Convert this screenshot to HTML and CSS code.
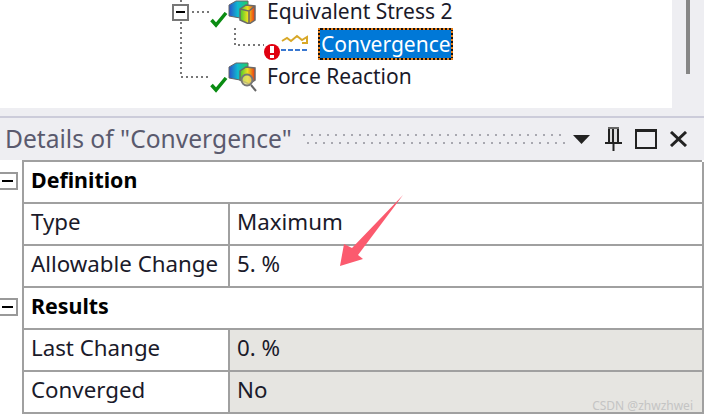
FILE: index.html
```html
<!DOCTYPE html>
<html lang="en">
<head>
  <meta charset="UTF-8">
  <meta name="viewport" content="width=device-width, initial-scale=1.0">
  <title>Details of Convergence</title>
  <link rel="stylesheet" href="styles.css">
</head>
<body>
  <svg class="defs" width="0" height="0">
    <defs>
      <linearGradient id="backFace" x1="0" x2="1" y1="0" y2="0">
        <stop offset="0" stop-color="#2a50c8"/>
        <stop offset=".45" stop-color="#10b8d0"/>
        <stop offset="1" stop-color="#20d060"/>
      </linearGradient>
      <linearGradient id="frontFace" x1="0" x2="1" y1="0" y2="0">
        <stop offset="0" stop-color="#40c830"/>
        <stop offset=".5" stop-color="#e8e020"/>
        <stop offset="1" stop-color="#f03010"/>
      </linearGradient>
    </defs>
  </svg>

  <div class="top-area">
    <div class="tree">
      <!-- dotted connectors lie over the rows -->
      <svg class="tree-lines" width="300" height="108" viewBox="172 0 300 108">
        <g fill="none" stroke="#777" stroke-width="2" stroke-dasharray="2 3">
          <path d="M181 0V4M181 22V77H208M192 12H210M235 28V45H264"/>
        </g>
        <rect x="173" y="5" width="15" height="15" fill="#fff" stroke="#777" stroke-width="2"/>
        <rect x="176" y="11" width="9" height="2" fill="#000"/>
      </svg>

      <div class="tree-row row-stress">
        <svg class="icon-state" width="20" height="16" viewBox="0 0 20 16"><path d="M1.500 8L6 13L16 1" fill="none" stroke="#0a8c12" stroke-width="3.500"/></svg>
        <svg class="icon-cube" width="28" height="24" viewBox="0 0 28 24">
          <path d="M1 5L8 1H20V14L12 18L1 16Z" fill="url(#backFace)" stroke="#666"/>
          <path d="M12 9L18 5L27 6V20L21 24L12 20Z" fill="url(#frontFace)"/>
          <path d="M12 9L18 5L27 6V20L21 24L12 20ZM12 9L21 11V24M21 11L27 6" fill="none" stroke="#6a6a6a" stroke-width="1.500"/>
        </svg>
        <span class="tree-label">Equivalent Stress 2</span>
      </div>

      <div class="tree-row row-conv">
        <svg class="icon-error" width="18" height="18" viewBox="0 0 18 18">
          <circle cx="9" cy="9" r="8" fill="#e00010"/>
          <rect x="7" y="3" width="4" height="7" fill="#fff"/>
          <rect x="7" y="12" width="4" height="3" fill="#fff"/>
        </svg>
        <svg class="icon-conv" width="30" height="18" viewBox="0 0 30 18">
          <path d="M1 7l5-3 4 3 6-5 5 4 5-3v6h-5" fill="none" stroke="#d8a828" stroke-width="2"/>
          <path d="M0 16H28" stroke="#3a78d0" stroke-width="2" stroke-dasharray="5 2"/>
        </svg>
        <span class="tree-label selected">Convergence</span>
      </div>

      <div class="tree-row row-force">
        <svg class="icon-state" width="20" height="16" viewBox="0 0 20 16"><path d="M1.500 8L6 13L16 1" fill="none" stroke="#0a8c12" stroke-width="3.500"/></svg>
        <svg class="icon-cube" width="30" height="30" viewBox="0 0 30 30">
          <path d="M1 5L8 1H20V14L12 18L1 16Z" fill="url(#backFace)" stroke="#666"/>
          <path d="M12 9L18 5L27 6V18L21 22L12 18Z" fill="url(#frontFace)" stroke="#6a6a6a" stroke-width="1.500"/>
          <circle cx="19" cy="18" r="5.500" fill="#e8e070" fill-opacity=".7" stroke="#777" stroke-width="2"/>
          <path d="M23 23l5 6" stroke="#666" stroke-width="2"/>
        </svg>
        <span class="tree-label">Force Reaction</span>
      </div>
    </div>
    <div class="scroll-side"><div class="scroll-thumb"></div></div>
  </div>

  <div class="panel-gap"></div>

  <div class="panel-header">
    <span class="panel-title">Details of "Convergence"</span>
    <div class="grip"></div>
    <svg class="tool-arrow" width="17" height="9" viewBox="0 0 17 9"><path d="M0 0H17L8.500 9Z" fill="#222"/></svg>
    <svg class="tool-pin" width="17" height="24" viewBox="0 0 17 24">
      <rect x="3" y="1" width="11" height="14" fill="#ddd"/>
      <path d="M4 1V15M13 1V15M8 1V15" stroke="#222" stroke-width="2"/>
      <path d="M3 1H14" stroke="#666" stroke-width="2"/>
      <path d="M0 16H17" stroke="#222" stroke-width="2"/>
      <path d="M8.500 16V24" stroke="#222" stroke-width="2"/>
    </svg>
    <div class="tool-box"></div>
    <svg class="tool-close" width="19" height="16" viewBox="0 0 19 16"><path d="M2 1L17 15M17 1L2 15" stroke="#222" stroke-width="3"/></svg>
  </div>

  <div class="details">
    <div class="gutter">
      <div class="gutter-cell"><div class="expander"></div></div>
      <div class="gutter-cell"></div>
      <div class="gutter-cell"></div>
      <div class="gutter-cell"><div class="expander"></div></div>
      <div class="gutter-cell"></div>
      <div class="gutter-cell"></div>
    </div>
    <div class="grid">
      <div class="group">Definition</div>
      <div class="cell">Type</div>
      <div class="cell">Maximum</div>
      <div class="cell">Allowable Change</div>
      <div class="cell">5. %</div>
      <div class="group">Results</div>
      <div class="cell">Last Change</div>
      <div class="cell readonly">0. %</div>
      <div class="cell">Converged</div>
      <div class="cell readonly">No</div>
    </div>
  </div>

  <svg class="mark-arrow" width="70" height="76" viewBox="338 193 70 76">
    <path d="M403 195L358 255L363 259L340 266L344 244L352 248Z" fill="#fb5a6e"/>
  </svg>
  <span class="watermark">CSDN @zhwzhwei</span>
</body>
</html>
```

FILE: styles.css
```css
html, body {
  margin: 0;
  padding: 0;
}

body {
  position: relative;
  width: 704px;
  height: 418px;
  overflow: hidden;
  background-color: #fff;
  font-family: "Noto Sans", sans-serif;
  font-size: 21px;
  color: #1a1a2a;
}

.defs {
  position: absolute;
}

.top-area {
  display: flex;
  height: 108px;
}

.tree {
  position: relative;
  width: 672px;
  box-sizing: border-box;
  padding-left: 210px;
  background-color: #fff;
}

.tree-lines {
  position: absolute;
  left: 172px;
  top: 0;
}

.tree-row {
  display: flex;
  align-items: center;
}

.row-stress {
  height: 24px;
}

.row-stress .icon-state {
  align-self: flex-end;
  margin-bottom: -4px;
  margin-right: -2px;
}

.row-stress .tree-label {
  margin-left: 11px;
  margin-bottom: 2px;
  line-height: 22px;
}

.row-conv {
  height: 32px;
  margin-top: 4px;
  padding-left: 53px;
}

.icon-error {
  align-self: flex-end;
  margin-bottom: -1px;
}

.icon-conv {
  margin-bottom: 2px;
  margin-right: 7px;
  flex: none;
}

.row-force {
  height: 30px;
  padding-top: 2px;
}

.row-force .icon-state {
  align-self: flex-end;
  margin-bottom: -1px;
  margin-right: -2px;
}

.row-force .tree-label {
  margin-left: 9px;
  margin-bottom: 2px;
}

.tree-label {
  white-space: nowrap;
  line-height: 24px;
}

.selected {
  box-sizing: border-box;
  width: 135px;
  height: 32px;
  line-height: 29px;
  padding-left: 1px;
  background: linear-gradient(#0078d7, #0078d7) padding-box, #111;
  color: #fff;
  border: 2px dotted #e8801a;
}

.scroll-side {
  width: 32px;
  background-color: #eeeef2;
}

.scroll-thumb {
  width: 4px;
  height: 74px;
  margin-left: 14px;
  background-color: #868686;
}

.panel-gap {
  height: 8px;
  background-color: #eeeef2;
}

.panel-header {
  display: flex;
  align-items: center;
  box-sizing: border-box;
  height: 44px;
  padding-left: 5px;
  border-top: 2px solid #ccccda;
  background-color: #eeeef2;
  color: #5a5a6e;
  font-size: 24.600px;
}

.panel-title {
  width: 298px;
  flex: none;
  padding-bottom: 2px;
  white-space: nowrap;
}

.grip {
  width: 262px;
  height: 10px;
  flex: none;
  background:
    radial-gradient(circle at 1px 1px, #a8a8b0 1px, transparent 1.500px) 0 0 / 8px 16px,
    radial-gradient(circle at 5px 9px, #a8a8b0 1px, transparent 1.500px) 0 0 / 8px 16px;
}

.tool-arrow {
  margin-left: 8px;
  flex: none;
}

.tool-pin {
  margin-left: 15px;
  flex: none;
}

.tool-box {
  box-sizing: border-box;
  width: 22px;
  height: 20px;
  margin-left: 13px;
  flex: none;
  border: 2px solid #222;
  border-top-width: 3px;
}

.tool-close {
  margin-left: 12px;
  flex: none;
}

.details {
  display: flex;
}

.gutter {
  width: 22px;
  flex: none;
}

.gutter-cell {
  height: 42px;
  padding-top: 12px;
  box-sizing: border-box;
}

.expander {
  position: relative;
  box-sizing: border-box;
  width: 18px;
  height: 18px;
  border: 2px solid #999;
  border-left: 0;
  background-color: #fff;
}

.expander::after {
  content: '';
  position: absolute;
  left: 2px;
  top: 6px;
  width: 11px;
  height: 2px;
  background-color: #000;
}

.grid {
  display: grid;
  grid-template-columns: 206px 474px;
  grid-auto-rows: 42px;
  width: 680px;
  box-sizing: border-box;
  border-top: 2px solid #a0a0a0;
  border-left: 2px solid #a0a0a0;
  font-size: 22.300px;
}

.group {
  grid-column: 1 / 3;
  display: flex;
  align-items: center;
  box-sizing: border-box;
  padding: 0 0 6px 7px;
  font-size: 21.400px;
  font-weight: 700;
  color: #000;
  border-bottom: 2px solid #a0a0a0;
  border-right: 2px solid #a0a0a0;
}

.cell {
  display: flex;
  align-items: center;
  box-sizing: border-box;
  padding: 0 0 6px 7px;
  border-bottom: 2px solid #a0a0a0;
  border-right: 2px solid #a0a0a0;
  white-space: nowrap;
}

.readonly {
  background-color: #e6e5e1;
}

.mark-arrow {
  position: absolute;
  left: 338px;
  top: 193px;
}

.watermark {
  position: absolute;
  right: 11px;
  top: 397px;
  font-size: 12px;
  color: #c4c4c4;
}
```
